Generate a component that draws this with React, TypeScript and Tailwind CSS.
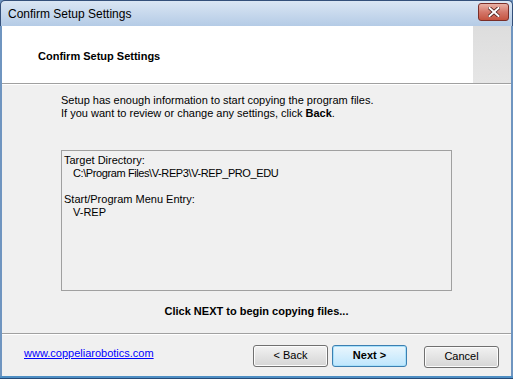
import React from "react";

const font = { fontFamily: '"Liberation Sans", Arial, sans-serif' };

function WinButton({ label, primary = false, bold = false }: { label: string; primary?: boolean; bold?: boolean }) {
  return (
    <button
      type="button"
      className={
        "h-[22px] w-[75px] rounded-[3px] border text-[11px] text-black " +
        (primary
          ? "border-[#3c7fb1] bg-gradient-to-b from-[#eaf6fd] to-[#bee6fd] shadow-[inset_0_0_0_1px_#a7e0fb]"
          : "border-[#707070] bg-gradient-to-b from-[#f2f2f2] to-[#d5d5d5] shadow-[inset_0_0_0_1px_#fcfcfc]") +
        (bold ? " font-bold" : "")
      }
    >
      {label}
    </button>
  );
}

export default function App() {
  return (
    <div className="flex h-[379px] w-[513px] flex-col overflow-hidden bg-[#6f95c0]" style={font}>
      {/* title bar */}
      <div className="flex h-[26px] items-center justify-between rounded-t-[5px] border-t border-l border-r border-[#34507a] bg-gradient-to-b from-[#dae6f3] to-[#b4cbe6] pl-[7px] pr-[3px]">
        <span className="text-[12px] text-black">Confirm Setup Settings</span>
        <div className="mb-[3px] flex h-[18px] w-[31px] items-center justify-center rounded-[3px] border border-[#7a2e28] bg-gradient-to-b from-[#e8b2a6] via-[#d4776a] to-[#c5533f]">
          <svg width="12" height="10" viewBox="0 0 12 10">
            <path d="M1.5 1 L10.5 9 M10.5 1 L1.5 9" stroke="#4a1e1a" strokeWidth="3.6" strokeLinecap="square" />
            <path d="M1.5 1 L10.5 9 M10.5 1 L1.5 9" stroke="#ffffff" strokeWidth="2" strokeLinecap="square" />
          </svg>
        </div>
      </div>

      <div className="mx-[2px] flex flex-1 flex-col bg-[#f0f0f0]">
        {/* header */}
        <div className="flex h-[57px] bg-white">
          <div className="flex flex-1 items-center pl-[36px] pt-[3px]">
            <span className="text-[11px] font-bold text-black">Confirm Setup Settings</span>
          </div>
          <div className="w-[38px] bg-gradient-to-b from-[#dddddd] to-[#e6e6e6]" />
        </div>
        <div className="h-px bg-[#a0a0a0]" />
        <div className="h-px bg-white" />

        {/* body */}
        <div className="flex flex-1 flex-col pl-[59px] pt-[9px] text-[11px] leading-[13px] text-black">
          <p>Setup has enough information to start copying the program files.</p>
          <p>
            If you want to review or change any settings, click <b>Back</b>.
          </p>
          <div className="mt-[30px] h-[141px] w-[391px] border border-[#a0a0a0] px-[2px] pt-[3px]">
            <p>Target Directory:</p>
            <p className="pl-[9px] tracking-[-0.4px]">C:\Program Files\V-REP3\V-REP_PRO_EDU</p>
            <p className="mt-[13px]">Start/Program Menu Entry:</p>
            <p className="pl-[9px]">V-REP</p>
          </div>
          <p className="mt-[14px] w-[391px] text-center font-bold">Click NEXT to begin copying files...</p>
        </div>

        <div className="h-px bg-[#a0a0a0]" />
        <div className="h-px bg-white" />

        {/* footer */}
        <div className="flex h-[41px] items-center pl-[22px] pr-[12px]">
          <a className="mb-[5px] text-[11px] text-[#0000ff] underline">www.coppeliarobotics.com</a>
          <div className="flex-1" />
          <div className="flex gap-[4px]">
            <WinButton label="< Back" />
            <WinButton label="Next >" primary bold />
          </div>
          <div className="ml-[17px]">
            <WinButton label="Cancel" />
          </div>
        </div>
      </div>
      <div className="h-[3px] border-b border-[#244a78] bg-[#4f8fc4]" />
    </div>
  );
}
